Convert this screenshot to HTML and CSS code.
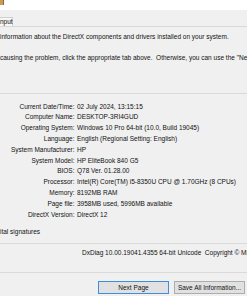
FILE: index.html
```html
<!DOCTYPE html>
<html>
<head>
<meta charset="utf-8">
<link rel="stylesheet" href="styles.css">
</head>
<body>
<div class="window">
  <div class="titlebar"><span class="appicon"></span></div>
  <div class="tabstrip"><div class="tab">nput</div></div>
  <div class="panel">
    <p class="intro first">information about the DirectX components and drivers installed on your system.</p>
    <p class="intro second">causing the problem, click the appropriate tab above.&nbsp; Otherwise, you can use the "Next Page" button below to visit each page in sequence.</p>
    <div class="rule top-rule"></div>
    <div class="info">
      <span class="label">Current Date/Time:</span><span class="value">02 July 2024, 13:15:15</span>
      <span class="label">Computer Name:</span><span class="value">DESKTOP-3RI4GUD</span>
      <span class="label">Operating System:</span><span class="value">Windows 10 Pro 64-bit (10.0, Build 19045)</span>
      <span class="label">Language:</span><span class="value">English (Regional Setting: English)</span>
      <span class="label">System Manufacturer:</span><span class="value">HP</span>
      <span class="label">System Model:</span><span class="value">HP EliteBook 840 G5</span>
      <span class="label">BIOS:</span><span class="value">Q78 Ver. 01.28.00</span>
      <span class="label">Processor:</span><span class="value">Intel(R) Core(TM) i5-8350U CPU @ 1.70GHz (8 CPUs)</span>
      <span class="label">Memory:</span><span class="value">8192MB RAM</span>
      <span class="label">Page file:</span><span class="value">3958MB used, 5996MB available</span>
      <span class="label">DirectX Version:</span><span class="value">DirectX 12</span>
    </div>
    <p class="check">ital signatures</p>
    <div class="rule mid-rule"></div>
    <p class="version">DxDiag 10.00.19041.4355 64-bit Unicode&nbsp; Copyright © Microsoft. All rights reserved.</p>
  </div>
  <div class="rule bottom-rule"></div>
  <div class="buttons">
    <button class="btn default">Next Page</button>
    <button class="btn">Save All Information...</button>
  </div>
</div>
</body>
</html>
```
FILE: styles.css
```css
html, body {
  margin: 0;
  padding: 0;
}
body {
  width: 247px;
  height: 296px;
  overflow: hidden;
  background: #f0f0f0;
  font-family: "Liberation Sans", Arial, sans-serif;
  font-size: 6.5px;
  color: #111;
}
.window {
  display: flex;
  flex-direction: column;
}
.titlebar {
  height: 10px;
  background: #ffffff;
  display: flex;
  align-items: flex-start;
}
.appicon {
  width: 3px;
  height: 5px;
  background: #c99b55;
  border-right: 1px solid #8a6a3a;
}
.tabstrip {
  height: 16px;
  border-bottom: 1px solid #d9d9d9;
  display: flex;
  align-items: flex-end;
}
.tab {
  height: 8px;
  line-height: 8px;
  padding: 0 2px 0 0;
  width: 10px;
  border: 1px solid #d0d0d0;
  border-left: none;
  border-bottom: none;
  background: #f7f7f7;
  white-space: nowrap;
}
.panel {
  display: flex;
  flex-direction: column;
}
.intro, .check, .version {
  margin: 0;
  line-height: 10px;
  white-space: nowrap;
  overflow: hidden;
}
.intro.first {
  margin-top: 5px;
}
.intro.second {
  margin-top: 11px;
}
.rule {
  height: 1px;
  background: #dadada;
}
.top-rule {
  margin-top: 30px;
}
.info {
  margin-top: 7.6px;
  display: grid;
  grid-template-columns: 74.5px 1fr;
  column-gap: 2.5px;
  line-height: 10.8px;
  white-space: nowrap;
}
.label {
  text-align: right;
}
.check {
  margin-top: 6.6px;
}
.mid-rule {
  margin-top: 6px;
}
.version {
  margin-top: 4px;
  padding-left: 82px;
}
.bottom-rule {
  margin-top: 14px;
}
.buttons {
  margin-top: 8px;
  display: flex;
  gap: 5px;
  padding-left: 98px;
}
.btn {
  width: 71px;
  height: 13px;
  flex: none;
  padding: 0;
  margin: 0;
  font-family: inherit;
  font-size: 6.5px;
  color: #111;
  background: #e1e1e1;
  border: 1px solid #adadad;
  white-space: nowrap;
  overflow: hidden;
}
.btn.default {
  border-color: #3c8ede;
}
```
